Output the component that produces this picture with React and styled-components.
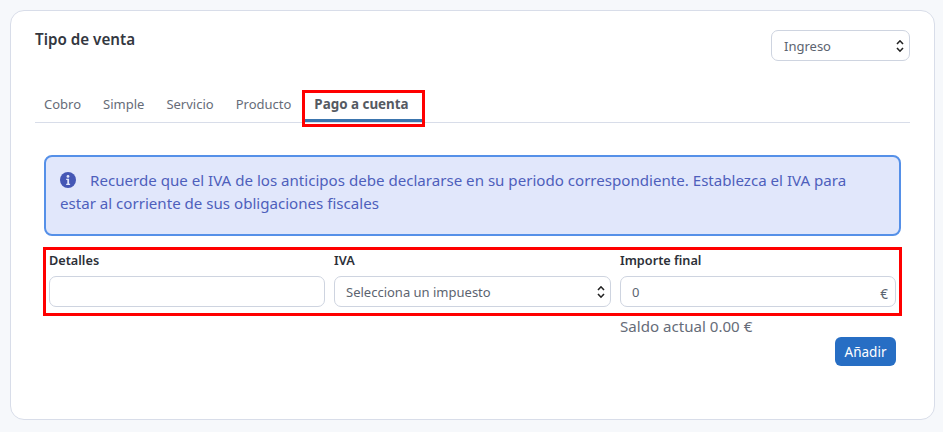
import React from 'react';
import styled, { createGlobalStyle } from 'styled-components';

const chevrons = `url("data:image/svg+xml,%3Csvg xmlns='http://www.w3.org/2000/svg' viewBox='0 0 8 16'%3E%3Cpath d='M1 6l3-3.2L7 6M1 10l3 3.2L7 10' fill='none' stroke='%23222' stroke-width='1.6'/%3E%3C/svg%3E")`;

const Global = createGlobalStyle`
  html, body { margin: 0; padding: 0; background: #f6f8fb; }
  body { font-family: "Noto Sans", "Open Sans", sans-serif; font-size: 14px; color: #5c6470; }
  * { box-sizing: border-box; }
`;

const Page = styled.div`
  width: 943px;
  height: 432px;
  padding: 10px 8px 12px 10px;
`;

const Card = styled.div`
  height: 410px;
  background: #fff;
  border: 1px solid #d8dde9;
  border-radius: 14px;
  padding: 19px 24px 0;
`;

const Header = styled.div`
  display: flex;
  justify-content: space-between;
  align-items: flex-start;
  height: 59px;
`;

const Title = styled.h2`
  margin: 0;
  font-size: 15.2px;
  line-height: 18px;
  font-weight: 600;
  color: #33373f;
`;

const SelectBase = styled.select`
  appearance: none;
  display: block;
  height: 31px;
  padding: 0 11px;
  font: inherit;
  font-size: 13px;
  color: #5c6470;
  background: #fff ${chevrons} no-repeat right 5px center / 8px 16px;
  border: 1px solid #ced4e0;
  border-radius: 7px;
`;

const TypeSelect = styled(SelectBase)`
  width: 139px;
  padding: 0 12px;
`;

const Tabs = styled.div`
  display: flex;
  align-items: flex-end;
  height: 34px;
  padding-left: 9px;
  border-bottom: 1px solid #d8dde9;
`;

const Tab = styled.div`
  position: relative;
  padding: 0 ${(p) => (p.$active ? '13px' : '0')} 5px ${(p) => (p.$active ? '9px' : '0')};
  margin-right: ${(p) => (p.$active ? '0' : '22px')};
  margin-left: ${(p) => (p.$active ? '-8px' : '0')};
  margin-bottom: ${(p) => (p.$active ? '0' : '3px')};
  font-size: ${(p) => (p.$active ? '13.4px' : '13px')};
  line-height: 20px;
  font-weight: ${(p) => (p.$active ? 700 : 400)};
  color: ${(p) => (p.$active ? '#555a62' : '#666c78')};
  border-bottom: ${(p) => (p.$active ? '3px solid #3b75ae' : '0')};
`;

const TabHighlight = styled.span`
  position: absolute;
  top: -4px;
  left: -3px;
  right: -3px;
  bottom: -8px;
  border: 3px solid #f00;
`;

const Alert = styled.div`
  margin: 32px 9px 0 9px;
  height: 81px;
  padding: 12px 30px 12px 14px;
  background: #e1e7fb;
  border: 2px solid #5590e8;
  border-radius: 8px;
  font-size: 15.1px;
  line-height: 23px;
  color: #4e5fbc;
`;

const InfoIcon = styled.svg`
  width: 16px;
  height: 16px;
  vertical-align: -2px;
  margin-right: 14px;
`;

const FieldRow = styled.div`
  display: grid;
  grid-template-columns: 276px 277px 276px;
  column-gap: 9px;
  margin: 11px 8px 0 8px;
  height: 69px;
  padding: 1px 3px 0;
  border: 3px solid #f00;
`;

const Field = styled.div`
  display: flex;
  flex-direction: column;
  position: relative;
`;

const Label = styled.label`
  font-size: 12.7px;
  line-height: 18px;
  font-weight: 600;
  color: #2c3038;
  margin-bottom: 7px;
`;

const TextInput = styled.input`
  height: 31px;
  padding: 0 11px;
  font: inherit;
  font-size: 13px;
  color: #5c6470;
  background: #fff;
  border: 1px solid #ced4e0;
  border-radius: 7px;
`;

const Euro = styled.span`
  position: absolute;
  right: 8px;
  bottom: 11px;
  font-size: 13.5px;
  line-height: 16px;
  color: #5c6470;
`;

const Footer = styled.div`
  display: flex;
  flex-direction: column;
  align-items: flex-start;
  margin: 0 14px 0 585px;
`;

const Balance = styled.div`
  font-size: 15.1px;
  line-height: 20px;
  color: #666c78;
`;

const AddButton = styled.button`
  align-self: flex-end;
  margin-top: 1px;
  width: 61px;
  height: 29px;
  padding: 0;
  font: inherit;
  font-size: 13.5px;
  color: #fff;
  background: #276ec4;
  border: 0;
  border-radius: 6px;
`;

export default function App() {
  return (
    <Page>
      <Global />
      <Card>
        <Header>
          <Title>Tipo de venta</Title>
          <TypeSelect defaultValue="Ingreso">
            <option>Ingreso</option>
            <option>Gasto</option>
          </TypeSelect>
        </Header>
        <Tabs>
          <Tab>Cobro</Tab>
          <Tab>Simple</Tab>
          <Tab>Servicio</Tab>
          <Tab>Producto</Tab>
          <Tab $active>
            Pago a cuenta
            <TabHighlight />
          </Tab>
        </Tabs>
        <Alert>
          <InfoIcon viewBox="0 0 16 16">
            <circle cx="8" cy="8" r="8" fill="#4557b5" />
            <circle cx="8" cy="4.4" r="1.4" fill="#e1e7fb" />
            <path d="M6.2 6.8h2.9v5h1v1.3H6.2v-1.3h1.1V8.1H6.2z" fill="#e1e7fb" />
          </InfoIcon>
          Recuerde que el IVA de los anticipos debe declararse en su periodo correspondiente. Establezca el IVA para estar al corriente de sus obligaciones fiscales
        </Alert>
        <FieldRow>
          <Field>
            <Label>Detalles</Label>
            <TextInput />
          </Field>
          <Field>
            <Label>IVA</Label>
            <SelectBase defaultValue="none">
              <option value="none">Selecciona un impuesto</option>
            </SelectBase>
          </Field>
          <Field>
            <Label>Importe final</Label>
            <TextInput defaultValue="0" />
            <Euro>€</Euro>
          </Field>
        </FieldRow>
        <Footer>
          <Balance>Saldo actual 0.00 €</Balance>
          <AddButton>Añadir</AddButton>
        </Footer>
      </Card>
    </Page>
  );
}
